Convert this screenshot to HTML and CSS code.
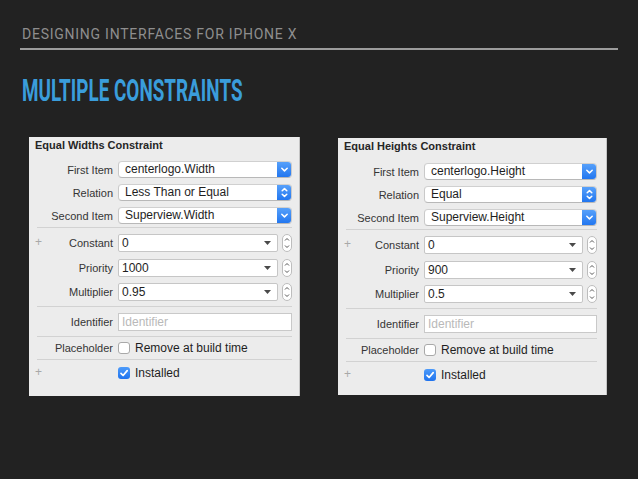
FILE: index.html
```html
<!DOCTYPE html>
<html>
<head>
<meta charset="utf-8">
<link rel="stylesheet" href="styles.css">
</head>
<body>
<div class="slide">
  <div class="header">DESIGNING INTERFACES FOR IPHONE X</div>
  <div class="title"><span class="title-text">MULTIPLE CONSTRAINTS</span></div>
  <div class="panels">
    <div class="panel panel-a">
      <div class="panel-title">Equal Widths Constraint</div>
      <div class="group popups">
        <div class="row"><span class="label">First Item</span><div class="popup"><span class="ptext">centerlogo.Width</span><span class="pbtn"><svg viewBox="0 0 15 17" width="15" height="17"><path d="M4.8 7.2 L7.5 9.9 L10.2 7.2" /></svg></span></div></div>
        <div class="row"><span class="label">Relation</span><div class="popup"><span class="ptext">Less Than or Equal</span><span class="pbtn"><svg viewBox="0 0 15 17" width="15" height="17"><path d="M5.2 6.8 L7.5 4.6 L9.8 6.8 M5.2 10.2 L7.5 12.4 L9.8 10.2" /></svg></span></div></div>
        <div class="row"><span class="label">Second Item</span><div class="popup"><span class="ptext">Superview.Width</span><span class="pbtn"><svg viewBox="0 0 15 17" width="15" height="17"><path d="M4.8 7.2 L7.5 9.9 L10.2 7.2" /></svg></span></div></div>
      </div>
      <div class="group combos">
        <div class="row"><span class="plus">+</span><span class="label">Constant</span><div class="combo"><span class="ctext">0</span><svg class="tri" viewBox="0 0 7 4" width="7" height="4"><polygon points="0,0 7,0 3.5,4"/></svg></div><span class="stepper"><svg viewBox="0 0 10 18" width="10" height="18"><path d="M3 6.5 L5 4.5 L7 6.5 M3 11.5 L5 13.5 L7 11.5"/></svg></span></div>
        <div class="row"><span class="label">Priority</span><div class="combo"><span class="ctext">1000</span><svg class="tri" viewBox="0 0 7 4" width="7" height="4"><polygon points="0,0 7,0 3.5,4"/></svg></div><span class="stepper"><svg viewBox="0 0 10 18" width="10" height="18"><path d="M3 6.5 L5 4.5 L7 6.5 M3 11.5 L5 13.5 L7 11.5"/></svg></span></div>
        <div class="row"><span class="label">Multiplier</span><div class="combo"><span class="ctext">0.95</span><svg class="tri" viewBox="0 0 7 4" width="7" height="4"><polygon points="0,0 7,0 3.5,4"/></svg></div><span class="stepper"><svg viewBox="0 0 10 18" width="10" height="18"><path d="M3 6.5 L5 4.5 L7 6.5 M3 11.5 L5 13.5 L7 11.5"/></svg></span></div>
      </div>
      <div class="group ident">
        <div class="row"><span class="label">Identifier</span><div class="field"><span class="ph">Identifier</span></div></div>
      </div>
      <div class="group check-row">
        <div class="row"><span class="label">Placeholder</span><span class="checkbox"></span><span class="ctext2">Remove at build time</span></div>
      </div>
      <div class="group check-row installed">
        <div class="row"><span class="plus">+</span><span class="label"></span><span class="checkbox checked"><svg viewBox="0 0 12 12" width="12" height="12"><path d="M3 6.3 L5.1 8.5 L9.2 3.6"/></svg></span><span class="ctext2">Installed</span></div>
      </div>
    </div>

    <div class="panel panel-b">
      <div class="panel-title">Equal Heights Constraint</div>
      <div class="group popups">
        <div class="row"><span class="label">First Item</span><div class="popup"><span class="ptext">centerlogo.Height</span><span class="pbtn"><svg viewBox="0 0 15 17" width="15" height="17"><path d="M4.8 7.2 L7.5 9.9 L10.2 7.2" /></svg></span></div></div>
        <div class="row"><span class="label">Relation</span><div class="popup"><span class="ptext">Equal</span><span class="pbtn"><svg viewBox="0 0 15 17" width="15" height="17"><path d="M5.2 6.8 L7.5 4.6 L9.8 6.8 M5.2 10.2 L7.5 12.4 L9.8 10.2" /></svg></span></div></div>
        <div class="row"><span class="label">Second Item</span><div class="popup"><span class="ptext">Superview.Height</span><span class="pbtn"><svg viewBox="0 0 15 17" width="15" height="17"><path d="M4.8 7.2 L7.5 9.9 L10.2 7.2" /></svg></span></div></div>
      </div>
      <div class="group combos">
        <div class="row"><span class="plus">+</span><span class="label">Constant</span><div class="combo"><span class="ctext">0</span><svg class="tri" viewBox="0 0 7 4" width="7" height="4"><polygon points="0,0 7,0 3.5,4"/></svg></div><span class="stepper"><svg viewBox="0 0 10 18" width="10" height="18"><path d="M3 6.5 L5 4.5 L7 6.5 M3 11.5 L5 13.5 L7 11.5"/></svg></span></div>
        <div class="row"><span class="label">Priority</span><div class="combo"><span class="ctext">900</span><svg class="tri" viewBox="0 0 7 4" width="7" height="4"><polygon points="0,0 7,0 3.5,4"/></svg></div><span class="stepper"><svg viewBox="0 0 10 18" width="10" height="18"><path d="M3 6.5 L5 4.5 L7 6.5 M3 11.5 L5 13.5 L7 11.5"/></svg></span></div>
        <div class="row"><span class="label">Multiplier</span><div class="combo"><span class="ctext">0.5</span><svg class="tri" viewBox="0 0 7 4" width="7" height="4"><polygon points="0,0 7,0 3.5,4"/></svg></div><span class="stepper"><svg viewBox="0 0 10 18" width="10" height="18"><path d="M3 6.5 L5 4.5 L7 6.5 M3 11.5 L5 13.5 L7 11.5"/></svg></span></div>
      </div>
      <div class="group ident">
        <div class="row"><span class="label">Identifier</span><div class="field"><span class="ph">Identifier</span></div></div>
      </div>
      <div class="group check-row">
        <div class="row"><span class="label">Placeholder</span><span class="checkbox"></span><span class="ctext2">Remove at build time</span></div>
      </div>
      <div class="group check-row installed">
        <div class="row"><span class="plus">+</span><span class="label"></span><span class="checkbox checked"><svg viewBox="0 0 12 12" width="12" height="12"><path d="M3 6.3 L5.1 8.5 L9.2 3.6"/></svg></span><span class="ctext2">Installed</span></div>
      </div>
    </div>
  </div>
</div>
</body>
</html>
```

FILE: styles.css
```css
html, body {
  margin: 0;
  padding: 0;
  background: #222222;
}
.slide {
  width: 638px;
  height: 479px;
  box-sizing: border-box;
  padding: 0 20px;
  overflow: hidden;
}
.header {
  padding: 26px 0 6px 2px;
  font-family: Roboto, "Liberation Sans", sans-serif;
  font-size: 14px;
  line-height: 16px;
  letter-spacing: 0.75px;
  color: #8e8e8e;
  border-bottom: 2px solid #9c9c9c;
}
.title {
  margin-top: 24px;
  height: 32px;
  padding-left: 2px;
  white-space: nowrap;
}
.title-text {
  display: inline-block;
  font-family: Roboto, "Liberation Sans", sans-serif;
  font-weight: 700;
  font-size: 32px;
  line-height: 32px;
  color: #3a9ddb;
  transform: scaleX(0.59);
  transform-origin: left center;
}
.panels {
  display: flex;
  gap: 38px;
  margin-top: 31px;
  padding-left: 9px;
}
.panel {
  background: #ececec;
  box-sizing: border-box;
  border-right: 1px solid #c4c4c4;
  font-family: "Liberation Sans", Arial, sans-serif;
  color: #2f2f2f;
  padding: 0 7px 0 6px;
}
.panel-a {
  width: 271px;
  height: 259px;
}
.panel-b {
  width: 269px;
  height: 257px;
  margin-top: 1px;
  padding-right: 9px;
}
.panel-title {
  font-size: 11px;
  font-weight: 700;
  line-height: 17px;
  color: #262626;
}
.group {
  display: flex;
  flex-direction: column;
}
.popups {
  margin-top: 7px;
  gap: 6px;
  padding-bottom: 3px;
}
.panel-b .popups {
  margin-top: 8px;
}
.combos {
  border-top: 1px solid #d2d2d2;
  margin-left: 2px;
  padding-top: 6px;
  gap: 6.5px;
  padding-bottom: 5px;
}
.ident {
  border-top: 1px solid #d2d2d2;
  margin-left: 2px;
  padding-top: 6px;
  padding-bottom: 5px;
}
.check-row {
  border-top: 1px solid #d2d2d2;
  margin-left: 2px;
}
.check-row .row {
  height: 22px;
}
.installed .row {
  height: 25px;
}
.row {
  display: flex;
  align-items: center;
  position: relative;
}
.combos .row, .check-row .row, .ident .row {
  margin-left: -2px;
}
.label {
  width: 78px;
  flex: none;
  text-align: right;
  font-size: 11px;
  color: #353535;
  margin-right: 5px;
  white-space: nowrap;
}
.panel-b .label {
  width: 75px;
}
.plus {
  position: absolute;
  left: 0;
  top: 50%;
  transform: translateY(-55%);
  font-size: 12px;
  color: #a8a8a8;
}
.popup {
  flex: 1;
  height: 17px;
  display: flex;
  background: #ffffff;
  border: 1px solid #c9c9c9;
  border-top-color: #d0d0d0;
  border-bottom-color: #b8b8b8;
  border-radius: 4px;
  box-sizing: border-box;
  overflow: hidden;
}
.ptext {
  flex: 1;
  font-size: 12px;
  line-height: 15px;
  padding-left: 6px;
  color: #1e1e1e;
  white-space: nowrap;
}
.pbtn {
  width: 15px;
  flex: none;
  margin: -1px -1px -1px 0;
  height: 17px;
  background: linear-gradient(#5aa3fb, #1f74ef);
  border-radius: 0 4px 4px 0;
  display: flex;
}
.pbtn path {
  fill: none;
  stroke: #ffffff;
  stroke-width: 1.5;
  stroke-linecap: round;
  stroke-linejoin: round;
}
.combo {
  flex: 1;
  height: 18px;
  box-sizing: border-box;
  background: #ffffff;
  border: 1px solid #c6c6c6;
  border-radius: 2px;
  display: flex;
  align-items: center;
  padding-right: 6px;
}
.ctext {
  flex: 1;
  font-size: 12px;
  padding-left: 3px;
  color: #1e1e1e;
}
.tri polygon {
  fill: #4a4a4a;
}
.stepper {
  flex: none;
  width: 10px;
  height: 18px;
  margin-left: 4px;
  box-sizing: border-box;
  border: 1px solid #bdbdbd;
  border-radius: 5px;
  background: #ffffff;
  display: flex;
  align-items: center;
  justify-content: center;
  overflow: hidden;
}
.stepper svg {
  flex: none;
}
.stepper path {
  fill: none;
  stroke: #555555;
  stroke-width: 1;
}
.field {
  flex: 1;
  height: 18px;
  box-sizing: border-box;
  background: #ffffff;
  border: 1px solid #c9c9c9;
  display: flex;
  align-items: center;
}
.ph {
  font-size: 12px;
  padding-left: 3px;
  color: #b9b9b9;
}
.checkbox {
  width: 12px;
  height: 12px;
  box-sizing: border-box;
  border: 1px solid #a9a9a9;
  border-radius: 3px;
  background: #ffffff;
  flex: none;
  display: flex;
}
.checkbox.checked {
  border: none;
  background: linear-gradient(#4d9bfa, #1f73ee);
}
.checkbox path {
  fill: none;
  stroke: #ffffff;
  stroke-width: 1.7;
  stroke-linecap: round;
  stroke-linejoin: round;
}
.ctext2 {
  font-size: 12px;
  margin-left: 5px;
  color: #1e1e1e;
  white-space: nowrap;
}
```
